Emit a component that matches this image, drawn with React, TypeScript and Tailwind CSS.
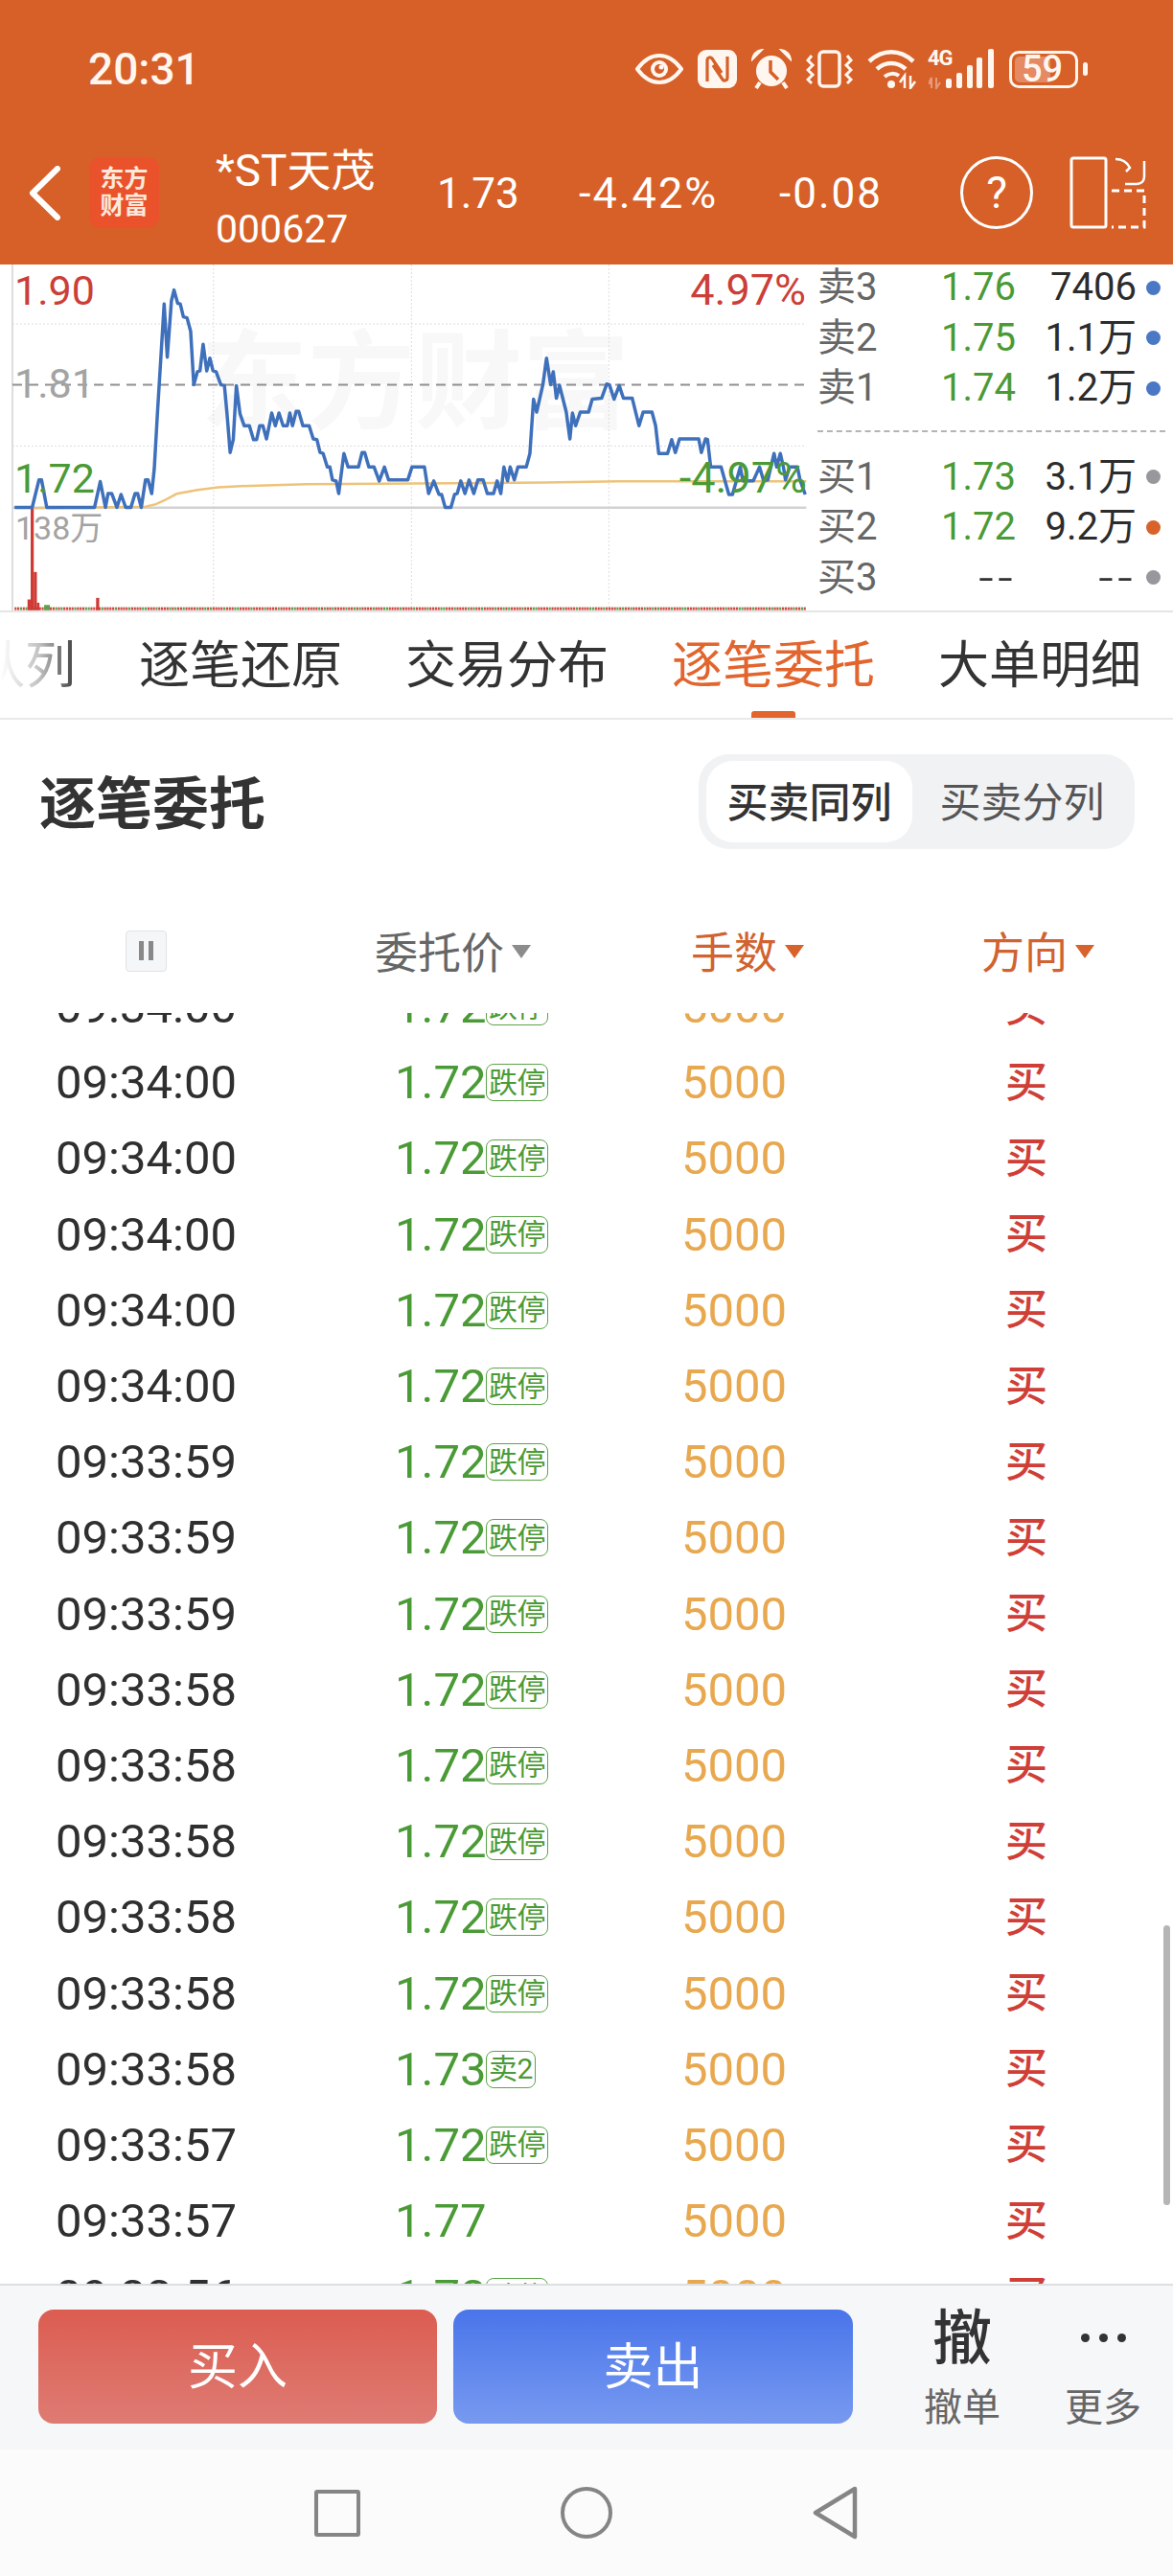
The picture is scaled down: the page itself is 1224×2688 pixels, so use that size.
import React from "react";

const sans = "font-['Roboto','Noto_Sans_CJK_SC',sans-serif]";

const bluePoints =
  "28,770 62,770 75,685 80,685 90,770 182,770 193,690 203,770 208,727 215,727 225,770 233,730 242,770 252,770 260,727 265,727 272,770 280,685 285,685 292,727 297,650 303,480 316,140 322,305 330,130 335,97 342,138 347,140 353,180 360,183 367,225 373,390 380,350 385,347 391,265 398,347 404,308 410,347 416,350 425,390 432,393 437,480 443,600 449,560 455,393 462,480 470,517 480,517 488,560 494,560 500,517 506,517 513,558 523,478 530,517 537,478 545,517 553,517 558,478 563,517 570,473 575,473 583,517 595,517 603,558 610,560 616,600 622,603 630,645 635,645 640,685 647,688 652,727 662,603 670,645 690,645 697,600 702,600 710,645 720,645 730,688 740,645 748,685 785,685 793,645 817,645 825,727 835,688 845,730 850,730 857,770 868,770 875,730 880,727 887,688 895,727 903,685 912,727 920,685 930,685 938,727 950,727 957,688 964,727 970,645 977,688 982,645 990,685 997,645 1013,645 1020,603 1027,435 1033,475 1045,390 1052,308 1060,390 1065,350 1071,432 1077,392 1090,475 1097,558 1102,478 1108,517 1117,475 1133,475 1140,435 1158,432 1168,388 1173,390 1182,435 1192,393 1200,432 1217,432 1230,517 1238,475 1255,475 1262,517 1268,603 1285,603 1293,560 1300,600 1308,558 1345,558 1350,600 1358,558 1362,560 1368,645 1388,645 1403,730 1410,730 1425,645 1430,688 1450,688 1462,645 1470,688 1478,685 1490,603 1495,645 1502,603 1508,645 1512,685 1520,645 1535,645 1540,685 1550,730";

const avgPoints =
  "65,772 280,768 300,760 320,745 340,728 380,716 420,708 480,703 590,698 1050,693 1190,689 1552,689";

const volumeBars = Array.from({ length: 292 }, (_, i) => ({
  x: 28 + i * 5.22,
  green: i % 5 === 2 || i % 11 === 4,
}));

const depth = [
  { label: "卖3", price: "1.76", amount: "7406", dot: "bg-[#4a78c4]" },
  { label: "卖2", price: "1.75", amount: "1.1万", dot: "bg-[#4a78c4]" },
  { label: "卖1", price: "1.74", amount: "1.2万", dot: "bg-[#4a78c4]" },
];

const depthBuy = [
  { label: "买1", price: "1.73", amount: "3.1万", dot: "bg-[#97979c]" },
  { label: "买2", price: "1.72", amount: "9.2万", dot: "bg-[#d8622c]" },
  { label: "买3", price: "--", amount: "--", dot: "bg-[#97979c]" },
];

const rows = [
  ["09:34:00", "1.72", "跌停"],
  ["09:34:00", "1.72", "跌停"],
  ["09:34:00", "1.72", "跌停"],
  ["09:34:00", "1.72", "跌停"],
  ["09:34:00", "1.72", "跌停"],
  ["09:34:00", "1.72", "跌停"],
  ["09:33:59", "1.72", "跌停"],
  ["09:33:59", "1.72", "跌停"],
  ["09:33:59", "1.72", "跌停"],
  ["09:33:58", "1.72", "跌停"],
  ["09:33:58", "1.72", "跌停"],
  ["09:33:58", "1.72", "跌停"],
  ["09:33:58", "1.72", "跌停"],
  ["09:33:58", "1.72", "跌停"],
  ["09:33:58", "1.73", "卖2"],
  ["09:33:57", "1.72", "跌停"],
  ["09:33:57", "1.77", ""],
  ["09:33:56", "1.72", "跌停"],
];

function StatusIcons() {
  return (
    <div className="ml-auto flex items-center gap-[15px] text-white">
      <svg width="50" height="34" viewBox="0 0 50 34" fill="none">
        <path d="M2 17C10 6 17 3 25 3s15 3 23 14c-8 11-15 14-23 14S10 28 2 17z" stroke="#fff6f0" strokeWidth="4" />
        <circle cx="25" cy="17" r="9" fill="#fff6f0" />
        <circle cx="25" cy="17" r="5" fill="#d66028" />
        <circle cx="27" cy="15" r="2.5" fill="#fff6f0" />
      </svg>
      <svg width="41" height="40" viewBox="0 0 41 40">
        <rect x="0" y="0" width="41" height="40" rx="9" fill="#fff6f0" />
        <path d="M10 33V11c0-3 3-4 5-2l10 15M31 7v22c0 3-3 4-5 2L16 16" fill="none" stroke="#d66028" strokeWidth="3.2" />
      </svg>
      <svg width="42" height="42" viewBox="0 0 42 42">
        <path d="M1 11C2 5 6 2 11 1z M41 11C40 5 36 2 31 1z" fill="#fff6f0" stroke="#fff6f0" strokeWidth="2" />
        <circle cx="21" cy="23" r="16" fill="#fff6f0" />
        <path d="M20 12v12l8 8" fill="none" stroke="#d66028" strokeWidth="3.5" />
        <path d="M9 35l-4 6M33 35l4 6" stroke="#fff6f0" strokeWidth="4" />
      </svg>
      <svg width="49" height="40" viewBox="0 0 49 40" fill="none" stroke="#fff6f0">
        <rect x="14" y="2" width="21" height="36" rx="4" strokeWidth="3.5" />
        <path d="M6 6L2 11l5 5-5 5 5 5-5 5 4 4M43 6l4 5-5 5 5 5-5 5 5 5-4 4" strokeWidth="3" />
      </svg>
      <svg width="52" height="42" viewBox="0 0 52 42" fill="none" stroke="#fff6f0">
        <path d="M2 13C16 0 34 0 48 13" strokeWidth="4.5" />
        <path d="M10 21c9-8 21-8 30 0" strokeWidth="4.5" />
        <path d="M18 29c5-4 11-4 15-1" strokeWidth="4" />
        <circle cx="25" cy="37" r="4" fill="#fff6f0" stroke="none" />
        <path d="M39 41V28l-5 7M45 28v13l5-7" strokeWidth="2.5" />
      </svg>
      <div className="relative -ml-[3px] h-[42px] w-[69px]">
        <span className="absolute -left-[1px] -top-[1px] text-[22px] leading-[22px] font-bold tracking-[-1px] text-[#fff6f0]">4G</span>
        <svg className="absolute left-0 top-0" width="69" height="42" viewBox="0 0 69 42" fill="#fff6f0">
          <path d="M3 41V30l-3 6h4M8 30v11l4-6" fill="none" stroke="#e8997a" strokeWidth="2" />
          <rect x="18" y="31" width="6" height="10" rx="2" />
          <rect x="29" y="25" width="6" height="16" rx="2" />
          <rect x="40" y="17" width="6" height="24" rx="2" />
          <rect x="50" y="9" width="6" height="32" rx="2" />
          <rect x="62" y="0" width="6" height="41" rx="2" />
        </svg>
      </div>
      <div className="relative flex h-[39px] w-[82px] items-center">
        <div className="h-[39px] w-[72px] overflow-hidden rounded-[10px] border-[3px] border-[#fff6f0] p-[3px]">
          <div className="h-full w-[37px] rounded-l-[5px] bg-[#e58a62]" />
        </div>
        <span className="absolute left-[13px] top-0 text-[38px] leading-[39px] font-medium text-[#fff6f0]">59</span>
        <div className="ml-[5px] h-[14px] w-[5px] rounded-full bg-[#fff6f0]" />
      </div>
    </div>
  );
}

function StockBar() {
  return (
    <div className="flex h-[150px] items-center text-white">
      <svg className="ml-[30px]" width="33" height="57" viewBox="0 0 33 57" fill="none">
        <path d="M30 3L4 28.5 30 54" stroke="#fff" strokeWidth="6" strokeLinecap="round" strokeLinejoin="round" />
      </svg>
      <div className="ml-[30px] flex h-[74px] w-[73px] flex-col items-center justify-center rounded-[12px] bg-[#e9522a] text-[25px] leading-[28px] font-bold text-[#fde8dc]">
        <span>东方</span>
        <span>财富</span>
      </div>
      <div className="ml-[59px] mt-[14px] flex w-[231px] flex-col">
        <span className="text-[46px] leading-[60px]">*ST天茂</span>
        <span className="mt-[1px] text-[41px] leading-[60px]">000627</span>
      </div>
      <span className="mt-[1px] w-[148px] text-[44px] leading-none">1.73</span>
      <span className="mt-[1px] w-[209px] text-[45px] leading-none tracking-[2px]">-4.42%</span>
      <span className="mt-[1px] w-[189px] text-[44px] leading-none tracking-[2px]">-0.08</span>
      <div className="flex h-[76px] w-[76px] items-center justify-center rounded-full border-[3px] border-white text-[46px] leading-none">?</div>
      <svg className="ml-[36px]" width="82" height="76" viewBox="0 0 82 76" fill="none" stroke="#fff" strokeWidth="3">
        <rect x="4" y="2" width="36" height="72" rx="2" />
        <path d="M80 5v16c0 5-3 8-8 8H60M50 3c6 0 12 3 15 9l-4 4" strokeWidth="2.5" />
        <path d="M46 36h34v38H46" strokeDasharray="8 5" strokeWidth="3" />
      </svg>
    </div>
  );
}

function Chart() {
  return (
    <div className="relative h-full w-[850px] shrink-0 overflow-hidden">
      <span className="absolute left-[209px] top-[60px] text-[112px] leading-[130px] font-bold whitespace-nowrap text-[#f8f8f8]">
        东方财富
      </span>
      <svg className="absolute inset-0 h-full w-full" viewBox="0 18 1568 1071" preserveAspectRatio="none" fill="none">
        <line x1="24" y1="18" x2="24" y2="1090" stroke="#dddddd" strokeWidth="2" vectorEffect="non-scaling-stroke" />
        {[411, 792, 1172].map((x) => (
          <line key={x} x1={x} y1="18" x2={x} y2="1085" stroke="#dcdcdc" strokeWidth="1" strokeDasharray="2 2" vectorEffect="non-scaling-stroke" />
        ))}
        {[202, 580].map((y) => (
          <line key={y} x1="24" y1={y} x2="1552" y2={y} stroke="#dcdcdc" strokeWidth="1" strokeDasharray="2 2" vectorEffect="non-scaling-stroke" />
        ))}
        <line x1="24" y1="390" x2="1552" y2="390" stroke="#8f8f8f" strokeWidth="2" strokeDasharray="10 7" vectorEffect="non-scaling-stroke" />
        <line x1="24" y1="771" x2="1552" y2="771" stroke="#d2d2d2" strokeWidth="2.5" vectorEffect="non-scaling-stroke" />
        {volumeBars.map((b) => (
          <rect key={b.x} x={b.x} y="1079" width="4" height="9" fill={b.green ? "#5da24a" : "#cf4a44"} />
        ))}
        <rect x="59" y="772" width="6" height="316" fill="#cf3a34" />
        <rect x="65" y="970" width="6" height="118" fill="#cf3a34" />
        <rect x="53" y="1055" width="6" height="33" fill="#cf3a34" />
        <rect x="71" y="1065" width="5" height="23" fill="#cf3a34" />
        <rect x="85" y="1072" width="11" height="16" fill="#5da24a" />
        <rect x="185" y="1050" width="6" height="38" fill="#cf3a34" />
        <polyline points={avgPoints} stroke="#eec37a" strokeWidth="2.5" vectorEffect="non-scaling-stroke" />
        <polyline points={bluePoints} stroke="#3f70bb" strokeWidth="3.5" strokeLinejoin="round" vectorEffect="non-scaling-stroke" />
      </svg>
      <span className="absolute left-[15px] top-[4px] text-[43px] leading-[46px] text-[#cc3e38]">1.90</span>
      <span className="absolute right-[9px] top-[4px] text-[45px] leading-[46px] text-[#cc3e38]">4.97%</span>
      <span className="absolute left-[15px] top-[101px] text-[43px] leading-[46px] text-[#a3a3a3]">1.81</span>
      <span className="absolute left-[15px] top-[200px] text-[43px] leading-[46px] text-[#4a9a36]">1.72</span>
      <span className="absolute right-[8px] top-[200px] text-[45px] leading-[46px] text-[#4a9a36]">-4.97%</span>
      <span className="absolute left-[16px] top-[255px] text-[34px] leading-[40px] text-[#a3a3a3]">138万</span>
    </div>
  );
}

function DepthRow({ label, price, amount, dot }: { label: string; price: string; amount: string; dot: string }) {
  const blank = "text-right text-[56px] font-light tracking-[4px] text-[#333333]";
  return (
    <div className="flex h-[52.5px] items-center text-[40px] leading-none">
      <span className="w-[129px] text-[#666666]">{label}</span>
      <span className={`w-[79px] ${price === "--" ? blank : "text-[#4a9a36]"}`}>{price}</span>
      <span className={`w-[125px] text-right ${amount === "--" ? blank : "text-[#2c2c2c]"}`}>{amount}</span>
      <span className={`ml-[10px] h-[15px] w-[15px] rounded-full ${dot}`} />
    </div>
  );
}

function DepthPanel() {
  return (
    <div className="-mt-[2px] ml-[3px] flex flex-1 flex-col">
      {depth.map((d) => (
        <DepthRow key={d.label} {...d} />
      ))}
      <div className="mb-[21px] mr-[8px] mt-[17px] border-t-2 border-dashed border-[#b4b4b4]" />
      {depthBuy.map((d) => (
        <DepthRow key={d.label} {...d} />
      ))}
    </div>
  );
}

function Tabs() {
  return (
    <div className="relative flex h-[112px] items-center overflow-hidden border-b-2 border-[#e9e9e9] pt-[2px] text-[53px] leading-none whitespace-nowrap text-[#333333]">
      <div className="-ml-[27px] flex gap-[66px]">
        <span>队列</span>
        <span>逐笔还原</span>
        <span>交易分布</span>
        <span className="text-[#e2652e]">逐笔委托</span>
        <span>大单明细</span>
      </div>
      <div className="absolute left-0 top-0 h-full w-[82px] bg-linear-to-r from-white via-white/70 to-transparent" />
      <div className="absolute bottom-0 left-[784px] h-[7px] w-[46px] rounded-t-[3px] bg-[#e2652e]" />
    </div>
  );
}

function TitleBar() {
  return (
    <div className="mt-[36px] flex h-[99px] items-center justify-between pl-[41px] pr-[40px]">
      <h1 className="pt-[5px] text-[59px] leading-none font-bold text-[#333333]">逐笔委托</h1>
      <div className="flex h-[99px] w-[455px] items-center rounded-[32px] bg-[#f1f2f4] px-[8px] text-[43px] leading-none">
        <div className="flex h-[85px] w-[215px] items-center justify-center rounded-[28px] bg-white pt-[3px] font-medium text-[#333333]">买卖同列</div>
        <div className="flex flex-1 items-center justify-center pl-[5px] pt-[3px] text-[#555555]">买卖分列</div>
      </div>
    </div>
  );
}

function Caret({ color }: { color: string }) {
  return (
    <svg className="mb-[5px]" width="20" height="14" viewBox="0 0 20 14">
      <path d="M0 0h20L10 14z" fill={color} />
    </svg>
  );
}

function TableHeader() {
  return (
    <div className="mt-[76px] flex h-[60px] items-center text-[45px] leading-none">
      <div className="ml-[131px] flex h-[43px] w-[43px] items-center justify-center gap-[5px] rounded-[4px] border border-[#e0e2e6] bg-[#f5f6f8]">
        <span className="h-[20px] w-[5px] bg-[#888888]" />
        <span className="h-[20px] w-[5px] bg-[#888888]" />
      </div>
      <div className="ml-[217px] flex w-[330px] items-center gap-[8px] pt-[6px] text-[#666666]">
        委托价 <Caret color="#8c8c8c" />
      </div>
      <div className="flex w-[303px] items-center gap-[8px] pt-[6px] text-[#d0632f]">
        手数 <Caret color="#d8622c" />
      </div>
      <div className="flex items-center gap-[8px] pt-[6px] text-[#d0632f]">
        方向 <Caret color="#d8622c" />
      </div>
    </div>
  );
}

function TradeRow({ time, price, tag }: { time: string; price: string; tag: string }) {
  return (
    <div className="flex h-[79.2px] items-center pl-[58px] leading-none">
      <span className="w-[354px] text-[49px] text-[#2f2f2f]">{time}</span>
      <div className="flex w-[299px] items-center text-[49px] text-[#4a9a36]">
        <span className="w-[95px]">{price}</span>
        {tag && (
          <span className="flex h-[39px] items-center rounded-[8px] border border-[#5ba548] px-[2px] text-[30px] leading-none tracking-[-0.5px]">
            {tag}
          </span>
        )}
      </div>
      <span className="w-[338px] text-[49px] text-[#e8a84f]">5000</span>
      <span className="text-[44px] font-medium text-[#cf3f38]">买</span>
    </div>
  );
}

function TradeList() {
  return (
    <div className="relative mt-[35px] flex-1 overflow-hidden">
      <div className="-mt-[46px]">
        {rows.map((r, i) => (
          <TradeRow key={i} time={r[0]} price={r[1]} tag={r[2]} />
        ))}
      </div>
      <div className="absolute right-[3px] top-[952px] h-[292px] w-[7px] rounded-full bg-[#b5b5b5]" />
    </div>
  );
}

function Footer() {
  return (
    <div className="flex h-[173px] border-t-2 border-[#dcdee2] bg-[#f6f7f9]">
      <button className="ml-[40px] mt-[25px] h-[119px] w-[416px] rounded-[16px] bg-linear-to-b from-[#dc5c50] to-[#de7b73] pt-[3px] text-[52px] leading-none text-white">
        买入
      </button>
      <button className="ml-[17px] mt-[25px] h-[119px] w-[417px] rounded-[16px] bg-linear-to-b from-[#4a75ea] to-[#7799f0] pt-[3px] text-[52px] leading-none text-white">
        卖出
      </button>
      <div className="ml-[64px] flex w-[100px] flex-col items-center pt-[24px]">
        <span className="flex h-[64px] items-center text-[62px] leading-none font-medium text-[#333333]">撤</span>
        <span className="mt-[15px] flex h-[50px] items-center text-[40px] leading-none text-[#666666]">撤单</span>
      </div>
      <div className="ml-[47px] flex w-[100px] flex-col items-center pt-[22px]">
        <div className="flex h-[64px] items-center gap-[10px]">
          <span className="h-[9px] w-[9px] rounded-full bg-[#333333]" />
          <span className="h-[9px] w-[9px] rounded-full bg-[#333333]" />
          <span className="h-[9px] w-[9px] rounded-full bg-[#333333]" />
        </div>
        <span className="mt-[17px] flex h-[50px] items-center text-[40px] leading-none text-[#666666]">更多</span>
      </div>
    </div>
  );
}

function NavBar() {
  return (
    <div className="flex h-[132px] items-center bg-[#fbfbfb]">
      <div className="ml-[328px] h-[49px] w-[48px] rounded-[3px] border-[4px] border-[#858585]" />
      <div className="ml-[209px] h-[54px] w-[54px] rounded-full border-[4px] border-[#858585]" />
      <svg className="ml-[208px]" width="48" height="56" viewBox="0 0 48 56" fill="none">
        <path d="M45 3L4 28l41 25z" stroke="#858585" strokeWidth="4.5" strokeLinejoin="round" />
      </svg>
    </div>
  );
}

export default function App() {
  return (
    <div className={`flex h-[2688px] w-[1224px] flex-col overflow-hidden bg-white ${sans}`}>
      <header className="h-[276px] shrink-0 bg-[#d66028]">
        <div className="flex h-[126px] items-center pl-[92px] pr-[89px] pt-[18px]">
          <span className="text-[46px] leading-none font-medium text-[#fff6f0]">20:31</span>
          <StatusIcons />
        </div>
        <StockBar />
      </header>
      <div className="flex h-[363px] shrink-0 border-b-2 border-[#e5e5e5]">
        <Chart />
        <DepthPanel />
      </div>
      <Tabs />
      <TitleBar />
      <TableHeader />
      <TradeList />
      <Footer />
      <NavBar />
    </div>
  );
}
